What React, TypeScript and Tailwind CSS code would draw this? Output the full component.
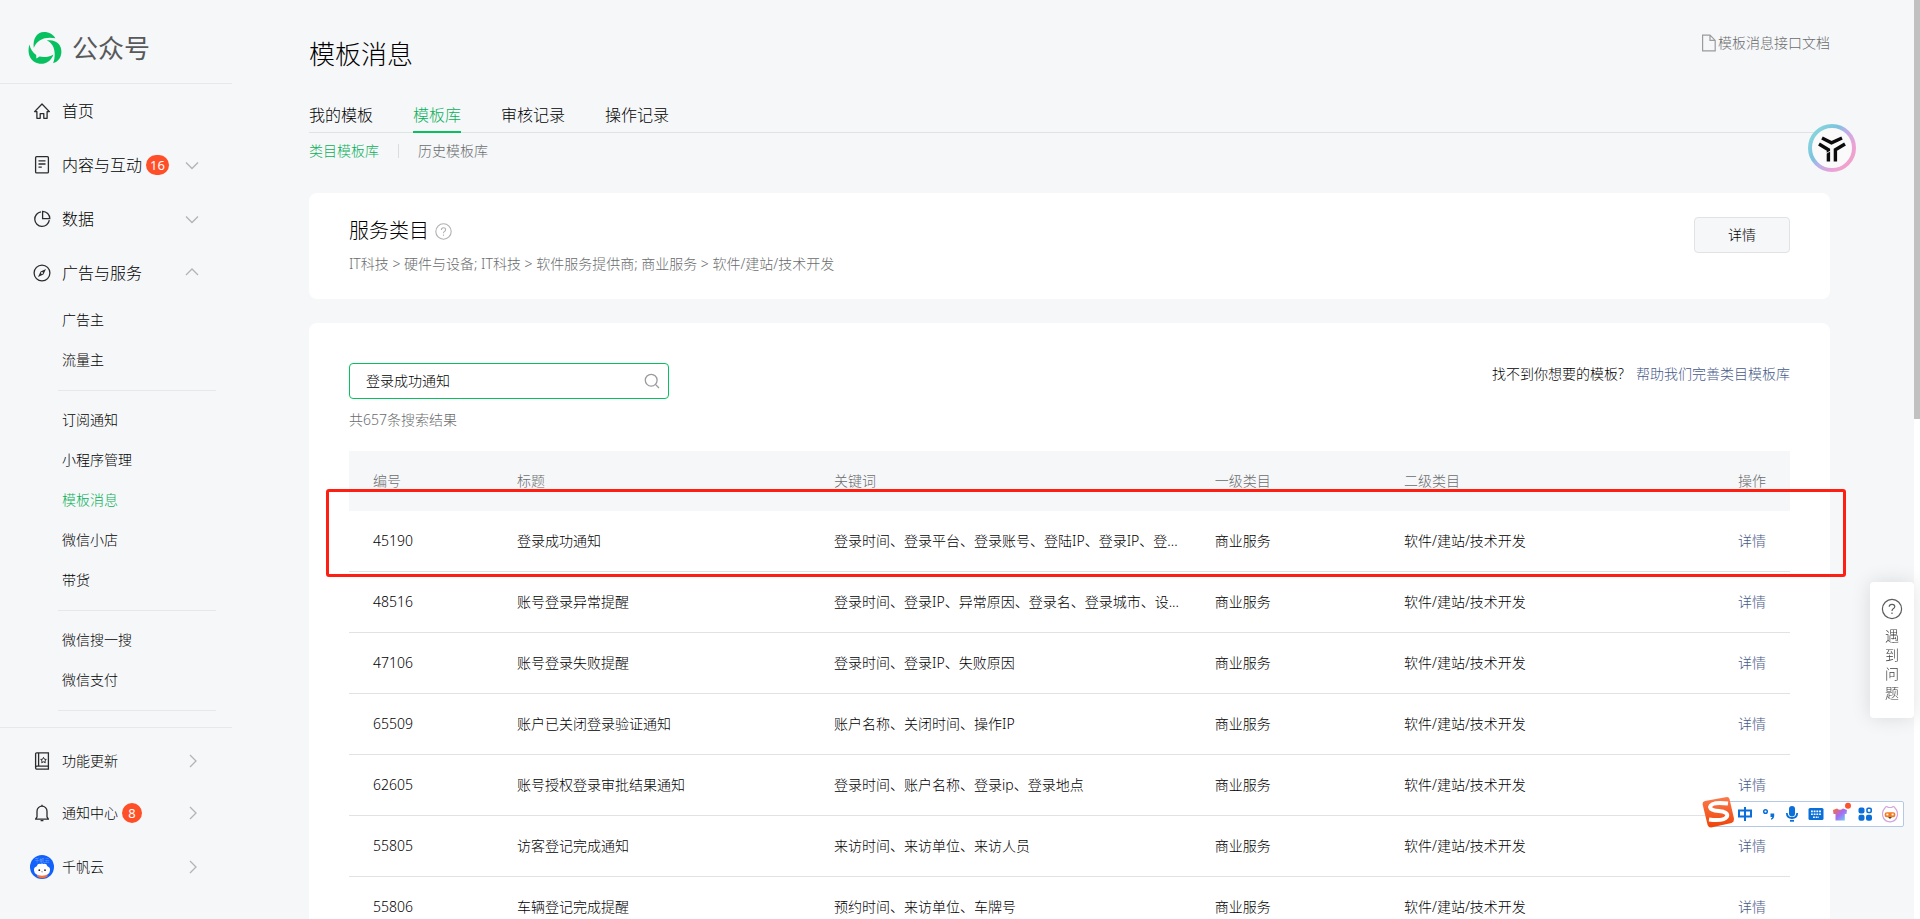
import type { ReactNode } from "react";

interface Template {
  id: string;
  title: string;
  keywords: string;
}

const templates: Template[] = [
  { id: "45190", title: "登录成功通知", keywords: "登录时间、登录平台、登录账号、登陆IP、登录IP、登..." },
  { id: "48516", title: "账号登录异常提醒", keywords: "登录时间、登录IP、异常原因、登录名、登录城市、设..." },
  { id: "47106", title: "账号登录失败提醒", keywords: "登录时间、登录IP、失败原因" },
  { id: "65509", title: "账户已关闭登录验证通知", keywords: "账户名称、关闭时间、操作IP" },
  { id: "62605", title: "账号授权登录审批结果通知", keywords: "登录时间、账户名称、登录ip、登录地点" },
  { id: "55805", title: "访客登记完成通知", keywords: "来访时间、来访单位、来访人员" },
  { id: "55806", title: "车辆登记完成提醒", keywords: "预约时间、来访单位、车牌号" },
];

const subMenu = [
  ["广告主", "流量主"],
  ["订阅通知", "小程序管理", "模板消息", "微信小店", "带货"],
  ["微信搜一搜", "微信支付"],
];

const tabs = ["我的模板", "模板库", "审核记录", "操作记录"];

function Icon({ children }: { children: ReactNode }) {
  return (
    <svg width="20" height="20" viewBox="0 0 20 20" fill="none" stroke="#2b2c2e" strokeWidth="1.3" className="shrink-0">
      {children}
    </svg>
  );
}

const HomeIcon = () => (
  <Icon>
    <path d="M2.6 10.6H4.9V17.3H8.2V12.6H11.8V17.3H15.1V10.6H17.4L10 3Z" strokeLinejoin="round" />
  </Icon>
);

const DocIcon = () => (
  <Icon>
    <rect x="3.6" y="1.7" width="12.8" height="16.2" rx="1" />
    <path d="M6.5 5.8H13.5M6.5 9H13.5M6.5 12.2H9.8" />
  </Icon>
);

const PieIcon = () => (
  <Icon>
    <path d="M9 2.9A7.3 7.3 0 1 0 17.3 11.2" />
    <path d="M10.6 2.3V9.7H17.8A7.4 7.4 0 0 0 10.6 2.3Z" />
  </Icon>
);

const CompassIcon = () => (
  <Icon>
    <circle cx="10" cy="10" r="7.9" />
    <path d="M14 6L11.4 11.4L6 14L8.6 8.6Z" fill="#2b2c2e" stroke="none" />
    <circle cx="10" cy="10" r="1" fill="#f6f7f9" stroke="none" />
  </Icon>
);

const BookIcon = () => (
  <Icon>
    <path d="M4.6 1.8H16.4V18.1H4.6A1.2 1.2 0 0 1 3.6 17V2.8A1 1 0 0 1 4.6 1.8ZM6.6 1.8V15.2M3.6 16.4Q3.8 15.2 5 15.2H16.4" />
    <path d="M11.5 6.4L12.4 8.2L14.3 8.5L12.9 9.8L13.3 11.7L11.5 10.8L9.7 11.7L10.1 9.8L8.7 8.5L10.6 8.2Z" strokeWidth="1" />
  </Icon>
);

const BellIcon = () => (
  <Icon>
    <path d="M3.6 16.2H16.4L15 13.9V8.2A5 5 0 0 0 5 8.2V13.9Z" strokeLinejoin="round" />
    <path d="M8.6 17.6H11.4M10 3.2V1.8" />
  </Icon>
);

const Avatar = () => (
  <svg width="24" height="24" viewBox="0 0 24 24" className="shrink-0">
    <circle cx="12" cy="12" r="12" fill="#1261fb" />
    <text x="12" y="7" fontSize="5" textAnchor="middle" fill="#9fc4ff">千帆云</text>
    <path d="M7 21.5Q12 25 17.5 21.5V19H7Z" fill="#f0713f" />
    <path d="M4 15.5A4 4 0 0 1 6.8 11.2Q7.6 8.3 10.2 8.9Q12 8 13.8 8.9Q16.6 8.4 17.4 11.2A4 4 0 0 1 20 15.5Q19.5 20.6 12 20.7Q4.5 20.6 4 15.5Z" fill="#fff" />
    <circle cx="9.3" cy="15.2" r="0.9" fill="#222" />
    <circle cx="15" cy="15.2" r="0.9" fill="#222" />
    <path d="M11.2 16.6Q12.1 17.4 13 16.6" stroke="#555" strokeWidth="0.5" fill="none" />
  </svg>
);

const Chevron = ({ dir }: { dir: "up" | "down" | "right" }) => {
  const paths = {
    up: "M2 10L8 4L14 10",
    down: "M2 5.5L8 11.5L14 5.5",
    right: "M6 2L12 8L6 14",
  };
  return (
    <svg width="16" height="16" viewBox="0 0 16 16" fill="none" stroke="#b3b4b6" strokeWidth="1.3" className="ml-auto shrink-0">
      <path d={paths[dir]} />
    </svg>
  );
};

const Badge = ({ children }: { children: ReactNode }) => (
  <span className="ml-1 flex h-5 min-w-5 items-center justify-center rounded-full bg-[#ff4f28] px-1 text-[13px] font-normal leading-5 text-white">
    {children}
  </span>
);

interface NavItemProps {
  icon: ReactNode;
  label: string;
  badge?: string;
  chevron?: "up" | "down" | "right";
  className: string;
}

function NavItem({ icon, label, badge, chevron, className }: NavItemProps) {
  return (
    <a href="#" className={`flex items-center pr-8 pl-[30px] ${className}`}>
      <span className="flex w-6 shrink-0 justify-center">{icon}</span>
      <span className="ml-2">{label}</span>
      {badge && <Badge>{badge}</Badge>}
      {chevron && <Chevron dir={chevron} />}
    </a>
  );
}

function Sidebar() {
  return (
    <aside className="w-[232px] shrink-0">
      <header className="flex h-21 items-center border-b border-[#e7e8ea] pt-3 pl-7">
        <svg width="34" height="34" viewBox="0 0 34 34" fill="#07c160">
          <path d="M5.8 17C4.6 8 8.6 1 16 1C21.4 1 25.4 3.6 27.4 7.3C17.5 5.4 9 8.4 5.8 17Z" />
          <path d="M18.8 9.6C27.4 8 33.6 13.4 33.4 21C33.2 26.6 30 31 25.2 32.2C27.8 25.6 28 13.4 18.8 9.6Z" />
          <path d="M1.4 13.6C-0.6 20.4 0.8 27.6 6.6 31C13.4 34.8 22.4 32.4 25.4 23.4C21.4 26 16 26.4 11.6 25.6L8.4 27.6L8.2 24C4.8 21.6 2.4 18 1.4 13.6Z" />
        </svg>
        <span className="ml-2.5 text-[26px] leading-9 font-normal text-[#58595b]">公众号</span>
      </header>
      <nav>
        <NavItem icon={<HomeIcon />} label="首页" className="h-[54px] text-base" />
        <NavItem icon={<DocIcon />} label="内容与互动" badge="16" chevron="down" className="h-[54px] text-base" />
        <NavItem icon={<PieIcon />} label="数据" chevron="down" className="h-[54px] text-base" />
        <NavItem icon={<CompassIcon />} label="广告与服务" chevron="up" className="h-[54px] text-base" />
        {subMenu.map((group, i) => (
          <ul key={i} className="mr-4 ml-[58px] border-b border-[#e7e8ea] pb-2.5 pl-1 not-first-of-type:pt-[9px]">
            {group.map((label) => (
              <li key={label}>
                <a
                  href="#"
                  className={`flex h-10 items-center text-sm ${label === "模板消息" ? "text-[#07b058]" : ""}`}
                >
                  {label}
                </a>
              </li>
            ))}
          </ul>
        ))}
      </nav>
      <nav className="mt-4 border-t border-[#e7e8ea] pt-[7px]">
        <NavItem icon={<BookIcon />} label="功能更新" chevron="right" className="h-[52px] text-sm" />
        <NavItem icon={<BellIcon />} label="通知中心" badge="8" chevron="right" className="h-[52px] text-sm" />
        <NavItem icon={<Avatar />} label="千帆云" chevron="right" className="h-14 text-sm" />
      </nav>
    </aside>
  );
}

function PageHeader() {
  return (
    <header>
      <div className="flex items-start justify-between pt-[34px]">
        <h2 className="text-[26px] leading-10">模板消息</h2>
        <a href="#" className="flex items-center gap-px text-sm leading-[18px] text-[#6a6c6d]">
          <svg width="16" height="18" viewBox="0 0 16 18" fill="none" stroke="#9a9b9d" strokeWidth="1.2">
            <path d="M1.6 1.2H9L14.2 6.4V16.8H1.6ZM9 1.2V6.4H14.2" />
          </svg>
          模板消息接口文档
        </a>
      </div>
      <ul className="mt-[25px] flex gap-10 border-b border-[#e1e2e4] text-base">
        {tabs.map((tab) => (
          <li key={tab} className={tab === "模板库" ? "-mb-px border-b-2 border-[#07c160] text-[#07b058]" : ""}>
            <a href="#" className="block leading-8">
              {tab}
            </a>
          </li>
        ))}
      </ul>
      <div className="mt-2 flex items-center text-sm leading-5">
        <a href="#" className="text-[#07b058]">
          类目模板库
        </a>
        <span className="mx-[19px] h-3.5 w-px bg-[#dcdddf]" />
        <a href="#" className="text-[#6a6c6d]">
          历史模板库
        </a>
      </div>
    </header>
  );
}

function ServiceCard() {
  return (
    <section className="mt-8 flex items-start justify-between rounded-lg bg-white px-10 py-6">
      <div>
        <h3 className="flex items-center gap-1.5 text-xl leading-7">
          服务类目
          <svg width="17" height="17" viewBox="0 0 17 17" fill="none" stroke="#b0b1b3" strokeWidth="1.1">
            <circle cx="8.5" cy="8.5" r="7.7" />
            <path d="M6.4 6.9Q6.4 4.8 8.5 4.8Q10.6 4.8 10.6 6.7Q10.6 7.7 9.4 8.4Q8.5 9 8.5 10.2M8.5 11.6V12.8" />
          </svg>
        </h3>
        <p className="mt-2 text-sm leading-[22px] text-[#6a6c6d]">
          IT科技 &gt; 硬件与设备; IT科技 &gt; 软件服务提供商; 商业服务 &gt; 软件/建站/技术开发
        </p>
      </div>
      <button type="button" className="h-9 w-24 rounded border border-[#e1e2e4] bg-[#f6f7f9] text-sm">
        详情
      </button>
    </section>
  );
}

function TemplateTable() {
  return (
    <div className="relative mt-5">
      <table className="w-full table-fixed border-separate border-spacing-0 text-left text-sm">
        <colgroup>
          <col className="w-[10%]" />
          <col className="w-[22%]" />
          <col className="w-[26%]" />
          <col className="w-[13%]" />
          <col />
          <col className="w-[120px]" />
        </colgroup>
        <thead>
          <tr className="h-[60px] bg-[#f6f7f9] text-[#6a6c6d]">
            <th className="pl-6 font-light">编号</th>
            <th className="pl-6 font-light">标题</th>
            <th className="pl-6 font-light">关键词</th>
            <th className="pl-[30px] font-light">一级类目</th>
            <th className="pl-8 font-light">二级类目</th>
            <th className="pr-6 text-right font-light">操作</th>
          </tr>
        </thead>
        <tbody>
          {templates.map((t) => (
            <tr key={t.id} className="h-[61px] *:border-b *:border-[#e1e2e4]">
              <td className="pl-6">{t.id}</td>
              <td className="pl-6">{t.title}</td>
              <td className="truncate pl-6">{t.keywords}</td>
              <td className="pl-[30px]">商业服务</td>
              <td className="pl-8">软件/建站/技术开发</td>
              <td className="pr-6 text-right">
                <a href="#" className="text-[#465a88]">
                  详情
                </a>
              </td>
            </tr>
          ))}
        </tbody>
      </table>
      {/* highlight around the first result */}
      <div className="pointer-events-none absolute top-[38px] -right-14 -left-[23px] h-[88px] rounded-[3px] border-3 border-[#ff1e12]" />
    </div>
  );
}

function LibraryCard() {
  return (
    <section className="mt-6 rounded-lg bg-white p-10">
      <div className="flex items-start justify-between">
        <div className="flex h-9 w-80 items-center rounded border border-[#07c160] pr-2 pl-4">
          <input
            type="text"
            aria-label="搜索模板"
            defaultValue="登录成功通知"
            className="min-w-0 flex-1 text-sm font-light text-black outline-none"
          />
          <svg width="16" height="16" viewBox="0 0 16 16" fill="none" stroke="#9a9b9d" strokeWidth="1.3">
            <circle cx="7.2" cy="7.2" r="5.9" />
            <path d="M11.4 11.4L15 15" />
          </svg>
        </div>
        <p className="flex gap-3 text-sm leading-[22px]">
          找不到你想要的模板?
          <a href="#" className="text-[#465a88]">
            帮助我们完善类目模板库
          </a>
        </p>
      </div>
      <p className="mt-2.5 text-sm leading-[22px] text-[#6a6c6d]">共657条搜索结果</p>
      <TemplateTable />
    </section>
  );
}

const HelpPanel = () => (
  <a
    href="#"
    className="fixed top-[582px] right-1.5 flex w-11 flex-col items-center rounded bg-white py-4 text-sm leading-[19px] text-[#3c3d3f] shadow-[0_0_20px_rgba(0,0,0,0.12)]"
  >
    <svg width="22" height="22" viewBox="0 0 22 22" fill="none" stroke="#5c5d5f" strokeWidth="1.2" className="mb-1.5">
      <circle cx="11" cy="11" r="9.6" />
      <path d="M8.2 8.8Q8.2 6.3 11 6.3Q13.8 6.3 13.8 8.6Q13.8 9.9 12.2 10.8Q11 11.6 11 13M11 14.6V16" />
    </svg>
    <span className="w-3.5 text-center">遇到问题</span>
  </a>
);

const AssistantBall = () => (
  <button type="button" aria-label="助手" className="fixed top-[124px] right-16">
    <svg width="48" height="48" viewBox="0 0 48 48">
      <defs>
        <linearGradient id="ring" x1="0" y1="0.1" x2="1" y2="0.9">
          <stop offset="0.1" stopColor="#86d3dc" />
          <stop offset="0.35" stopColor="#7cc3e0" />
          <stop offset="0.5" stopColor="#b9b0ea" />
          <stop offset="0.75" stopColor="#eba2d6" />
          <stop offset="1" stopColor="#f3a2c4" />
        </linearGradient>
      </defs>
      <circle cx="24" cy="24" r="22" fill="#fafafa" stroke="url(#ring)" strokeWidth="4" />
      <g fill="none" stroke="#0b0b0b" strokeWidth="3.4">
        <path d="M14 14L23.5 18.8L34 14" />
        <path d="M11 20L20.4 25.8V37.5" />
        <path d="M37 20L27.4 25.8V37.5" />
      </g>
      <path d="M18 29.5L22.5 27" stroke="#fafafa" strokeWidth="0.8" />
    </svg>
  </button>
);

function ImeBar() {
  return (
    <div className="fixed right-4 bottom-[92px] flex h-[26px] w-[192px] items-center justify-between rounded-xs border border-[#b5c9e6] bg-white pr-1 pl-6">
      <svg width="34" height="34" viewBox="0 0 34 34" className="absolute -top-1.5 -left-3">
        <defs>
          <linearGradient id="sogou" x1="0" y1="0" x2="0" y2="1">
            <stop offset="0" stopColor="#fb7a4b" />
            <stop offset="1" stopColor="#ef4308" />
          </linearGradient>
        </defs>
        <path d="M4 5L26 1Q28 1 28.5 3L33 22.5Q33 26 30.5 27L10 31.5Q7.5 31.5 6.6 29L1.5 8Q1.5 5.5 4 5Z" fill="url(#sogou)" />
        <path d="M27 7.5Q10 5.5 9 11Q9.5 14.5 18 15Q27.5 16 26 20.5Q23 25.5 8 23.5" fill="none" stroke="#fff" strokeWidth="4" />
      </svg>
      <svg width="16" height="16" viewBox="0 0 16 16" fill="none" stroke="#0a6fd8" strokeWidth="2">
        <path d="M2 4.5H14V10.5H2ZM8 1V15" />
      </svg>
      <svg width="16" height="16" viewBox="0 0 16 16">
        <circle cx="4.5" cy="5.5" r="1.8" fill="none" stroke="#0a6fd8" strokeWidth="1.5" />
        <path d="M9.5 7.5H13.2V10Q13 13 10 13.8V12.4Q11.2 12 11.3 11H9.5Z" fill="#0a6fd8" />
      </svg>
      <svg width="16" height="16" viewBox="0 0 16 16">
        <rect x="5" y="0" width="6" height="10.5" rx="3" fill="#0a6fd8" />
        <path d="M2.8 7Q3 12 8 12Q13 12 13.2 7" fill="none" stroke="#0a6fd8" strokeWidth="1.8" />
        <path d="M6 14.8H10" stroke="#0a6fd8" strokeWidth="1.8" />
      </svg>
      <svg width="16" height="16" viewBox="0 0 16 16">
        <rect x="0.5" y="2" width="15" height="12" rx="1.5" fill="#0a6fd8" />
        <path d="M3 5.4H13M3 8.2H13M5 11.3H11" stroke="#fff" strokeWidth="1.6" strokeDasharray="1.8 0.9" />
      </svg>
      <svg width="18" height="18" viewBox="0 0 18 18" className="overflow-visible">
        <defs>
          <linearGradient id="shirt" x1="0" y1="0" x2="1" y2="1">
            <stop offset="0.1" stopColor="#f26a4b" />
            <stop offset="0.5" stopColor="#a56bf5" />
            <stop offset="1" stopColor="#5fe0f5" />
          </linearGradient>
        </defs>
        <path d="M1 5L5 3.5Q8 6 11 3.5L15 5L14.5 9H12.8V15.5H3.5V9H1.5Z" fill="url(#shirt)" />
        <circle cx="16" cy="0.8" r="3" fill="#fb5430" />
      </svg>
      <svg width="16" height="16" viewBox="0 0 16 16" fill="#0a6fd8">
        <rect x="1.5" y="1.5" width="6" height="6" rx="2" />
        <rect x="10" y="2.3" width="4.2" height="4.2" rx="1.2" fill="none" stroke="#0a6fd8" strokeWidth="1.6" />
        <rect x="1.5" y="8.8" width="6" height="6" rx="2" />
        <rect x="9" y="8.8" width="6" height="6" rx="2" />
      </svg>
      <svg width="18" height="18" viewBox="0 0 18 18">
        <path d="M4 3Q5 0.5 7.5 2.5H10.5Q13 0.5 14 3Q17 6 16.4 10.5Q15 16.6 9 16.8Q3 16.6 1.6 10.5Q1 6 4 3Z" fill="#fff" stroke="#d3a7dd" strokeWidth="1.2" />
        <rect x="3.6" y="7.2" width="10.8" height="5" rx="2.2" fill="#f5791f" />
        <rect x="5.4" y="8.6" width="2" height="1.8" fill="#fff" />
        <rect x="10.6" y="8.6" width="2" height="1.8" fill="#fff" />
        <path d="M7 12H11L9 14Z" fill="#444" />
      </svg>
    </div>
  );
}

export default function App() {
  return (
    <div className="flex h-screen overflow-hidden bg-[#f6f7f9] font-['Noto_Sans','Noto_Sans_CJK_SC',sans-serif] font-light text-black">
      <Sidebar />
      <main className="ml-[77px] min-w-0 flex-1">
        <PageHeader />
        <ServiceCard />
        <LibraryCard />
      </main>
      <div className="ml-[84px] w-1.5 shrink-0 bg-white">
        <div className="h-[419px] bg-[#c1c1c1]" />
      </div>
      <AssistantBall />
      <HelpPanel />
      <ImeBar />
    </div>
  );
}
